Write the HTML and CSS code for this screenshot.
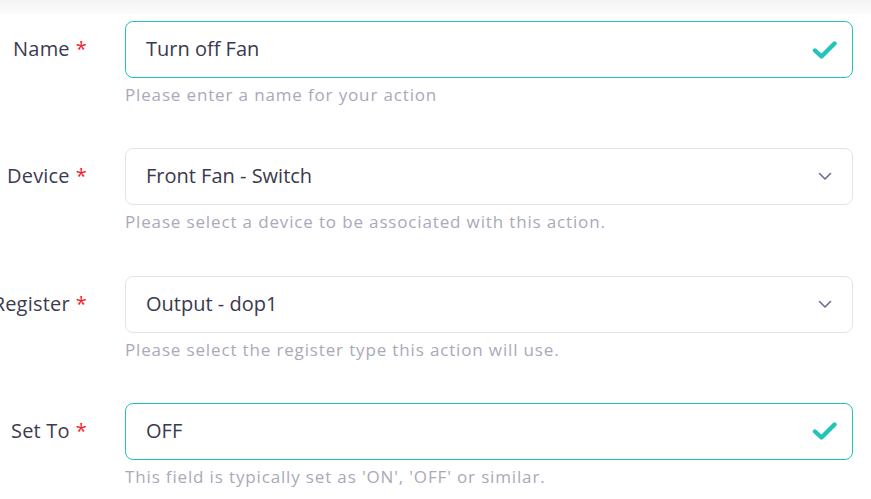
FILE: index.html
```html
<!DOCTYPE html>
<html lang="en">
<head>
<meta charset="utf-8">
<title>Action form</title>
<link rel="stylesheet" href="styles.css">
</head>
<body>
<div class="topbar"></div>
<form class="form">
  <div class="row">
    <label class="label">Name <span class="req">*</span></label>
    <div class="field">
      <div class="control valid">
        <span class="value">Turn off Fan</span>
        <svg class="check" width="26" height="20" viewBox="0 0 26 20"><path d="M3 10.5 L9.5 16.5 L22.5 3.5" fill="none" stroke="#22c3b9" stroke-width="4.4" stroke-linecap="round" stroke-linejoin="round"/></svg>
      </div>
      <div class="help">Please enter a name for your action</div>
    </div>
  </div>
  <div class="row">
    <label class="label">Device <span class="req">*</span></label>
    <div class="field">
      <div class="control">
        <span class="value">Front Fan - Switch</span>
        <svg class="chev" width="14" height="9" viewBox="0 0 14 9"><path d="M1.5 1.5 L7 7 L12.5 1.5" fill="none" stroke="#6f6c88" stroke-width="1.6" stroke-linecap="round" stroke-linejoin="round"/></svg>
      </div>
      <div class="help">Please select a device to be associated with this action.</div>
    </div>
  </div>
  <div class="row">
    <label class="label">Register <span class="req">*</span></label>
    <div class="field">
      <div class="control">
        <span class="value">Output - dop1</span>
        <svg class="chev" width="14" height="9" viewBox="0 0 14 9"><path d="M1.5 1.5 L7 7 L12.5 1.5" fill="none" stroke="#6f6c88" stroke-width="1.6" stroke-linecap="round" stroke-linejoin="round"/></svg>
      </div>
      <div class="help">Please select the register type this action will use.</div>
    </div>
  </div>
  <div class="row">
    <label class="label">Set To <span class="req">*</span></label>
    <div class="field">
      <div class="control valid">
        <span class="value">OFF</span>
        <svg class="check" width="26" height="20" viewBox="0 0 26 20"><path d="M3 10.5 L9.5 16.5 L22.5 3.5" fill="none" stroke="#22c3b9" stroke-width="4.4" stroke-linecap="round" stroke-linejoin="round"/></svg>
      </div>
      <div class="help">This field is typically set as 'ON', 'OFF' or similar.</div>
    </div>
  </div>
</form>
</body>
</html>
```

FILE: styles.css
```css
* { box-sizing: border-box; }
html, body { margin: 0; padding: 0; background: #ffffff; overflow: hidden; }
body {
  font-family: "Open Sans", "Noto Sans", sans-serif;
  color: #3c3b50;
}
.topbar {
  height: 14px;
  background: linear-gradient(#f4f4f5, #fbfbfb);
}
.form {
  display: flex;
  flex-direction: column;
  padding-top: 7px;
}
.row {
  display: grid;
  grid-template-columns: 87px 728px;
  column-gap: 38px;
  height: 127.33px;
}
.label {
  display: flex;
  justify-content: flex-end;
  align-items: center;
  height: 55px;
  font-size: 20px;
  letter-spacing: 0.2px;
  white-space: nowrap;
  color: #3c3b50;
}
.req {
  color: #f5222d;
  margin-left: 6px;
}
.control {
  height: 57px;
  border: 1px solid #e3e3ec;
  border-radius: 8px;
  display: flex;
  align-items: center;
  justify-content: space-between;
  padding: 0 20px 2px 20px;
  font-size: 20px;
  color: #3a394e;
}
.control.valid {
  border-color: #22c3b9;
  padding-right: 14px;
}
.control svg { margin-top: 2px; }
.help {
  margin-top: 7px;
  line-height: 20px;
  font-size: 17px;
  letter-spacing: 0.85px;
  color: #aaa9ba;
}
```
